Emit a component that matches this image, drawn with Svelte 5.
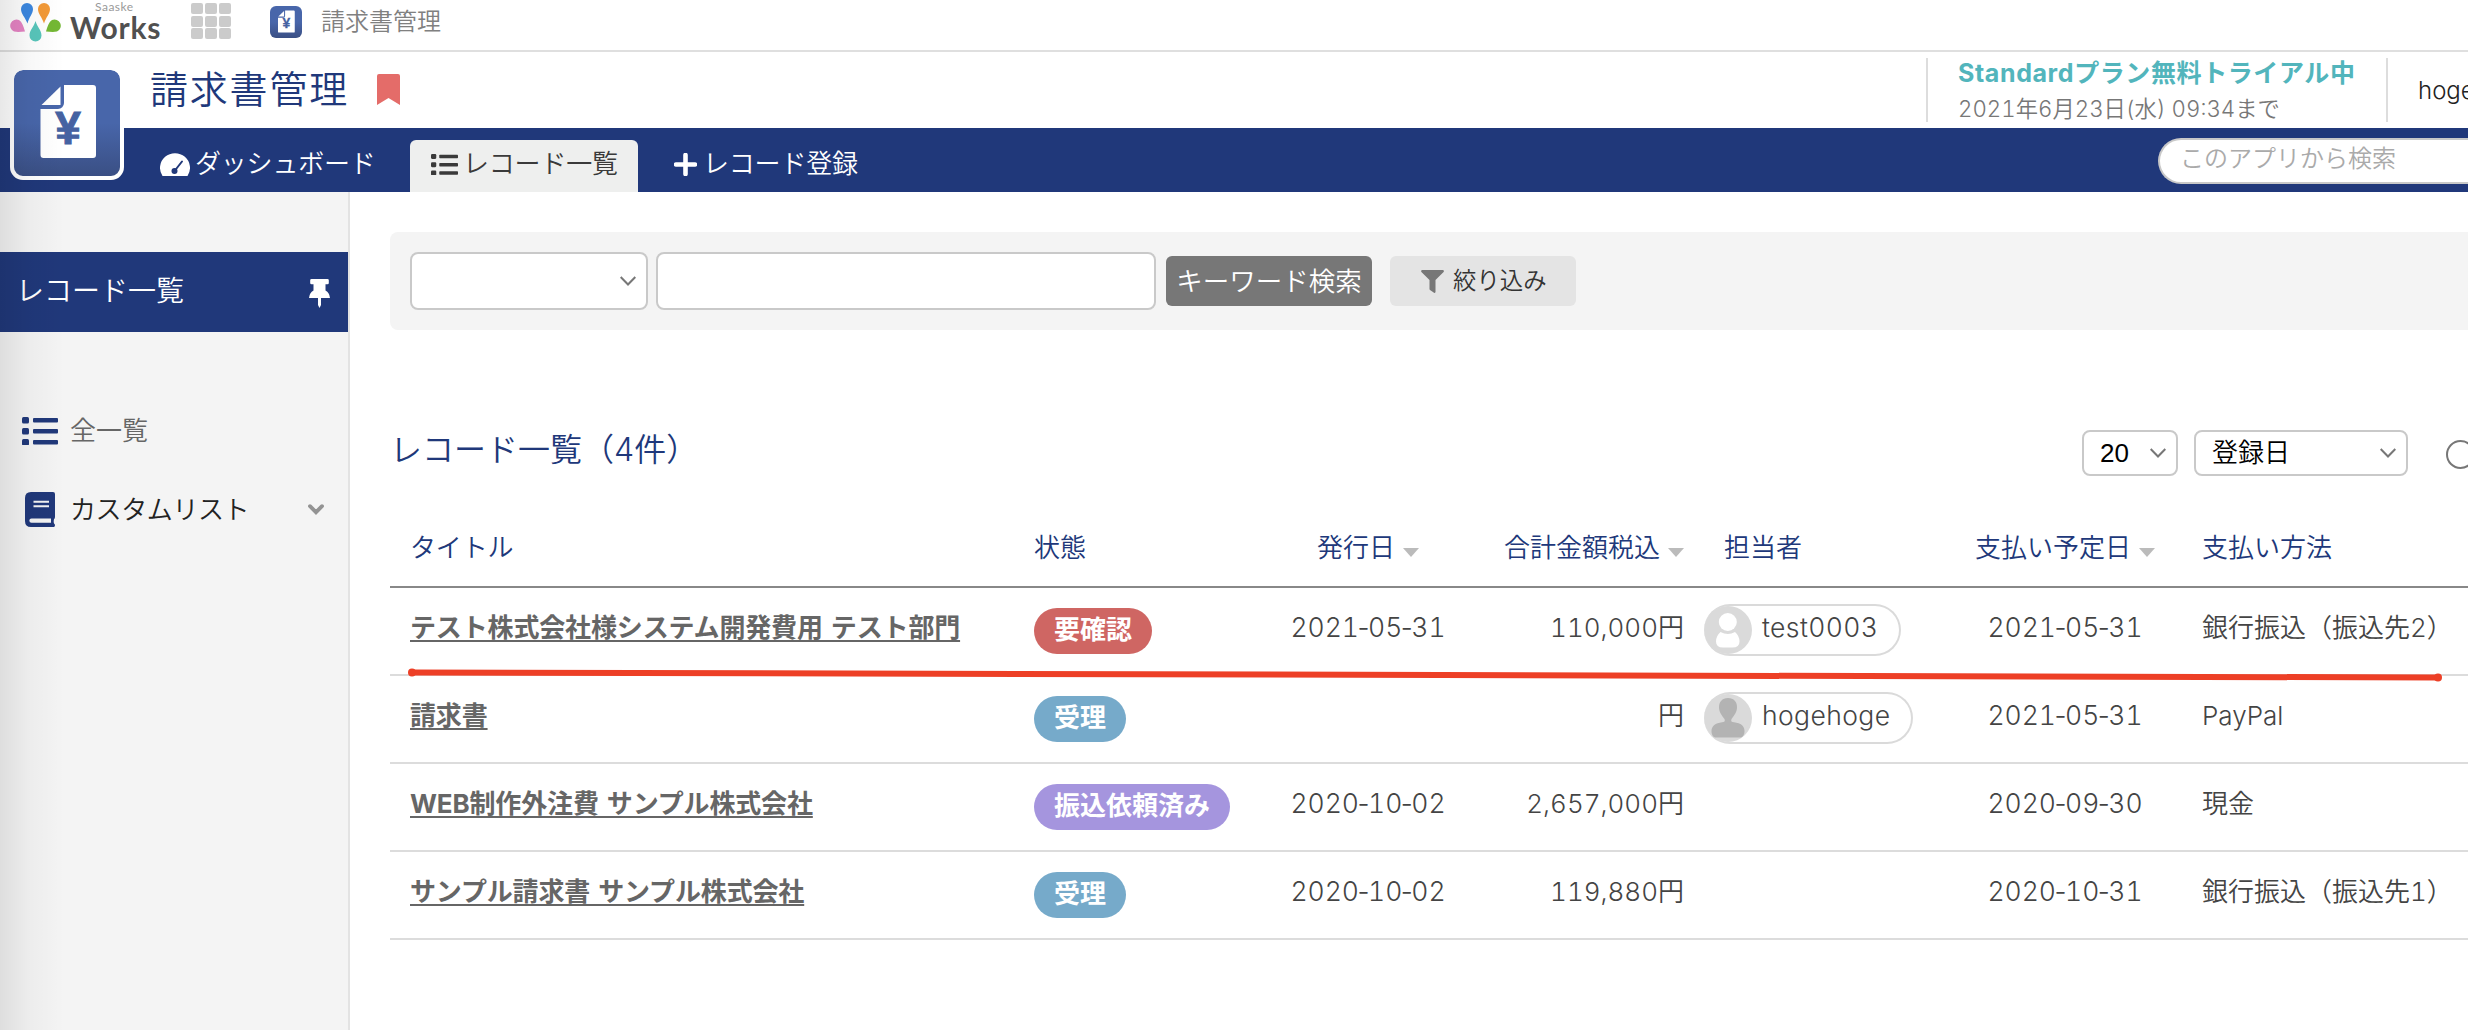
<script lang="ts">
    type Row = {
        title: string;
        status: string;
        tone: 'danger' | 'info' | 'violet';
        issued: string;
        amount: string;
        user?: string;
        avatar?: 'light' | 'dark';
        due: string;
        method: string;
    };

    const columns = [
        { key: 'title', label: 'タイトル', sortable: false },
        { key: 'status', label: '状態', sortable: false },
        { key: 'issued', label: '発行日', sortable: true },
        { key: 'amount', label: '合計金額税込', sortable: true },
        { key: 'user', label: '担当者', sortable: false },
        { key: 'due', label: '支払い予定日', sortable: true },
        { key: 'method', label: '支払い方法', sortable: false }
    ];

    const rows: Row[] = [
        { title: 'テスト株式会社様システム開発費用 テスト部門', status: '要確認', tone: 'danger', issued: '2021-05-31', amount: '110,000円', user: 'test0003', avatar: 'light', due: '2021-05-31', method: '銀行振込（振込先2）' },
        { title: '請求書', status: '受理', tone: 'info', issued: '', amount: '円', user: 'hogehoge', avatar: 'dark', due: '2021-05-31', method: 'PayPal' },
        { title: 'WEB制作外注費 サンプル株式会社', status: '振込依頼済み', tone: 'violet', issued: '2020-10-02', amount: '2,657,000円', due: '2020-09-30', method: '現金' },
        { title: 'サンプル請求書 サンプル株式会社', status: '受理', tone: 'info', issued: '2020-10-02', amount: '119,880円', due: '2020-10-31', method: '銀行振込（振込先1）' }
    ];
</script>

{#snippet invoice()}
    <svg viewBox="0 0 106 106">
        <path d="M50 15h29a3 3 0 0 1 3 3v67a3 3 0 0 1-3 3H29.500a3 3 0 0 1-3-3V39H44a6 6 0 0 0 6-6z" fill="#fff" />
        <path d="M46.500 16.500V35H27.500z" fill="#fff" />
        <text x="54" y="74" text-anchor="middle" class="yen">¥</text>
    </svg>
{/snippet}

{#snippet list()}
    <svg viewBox="0 0 36 28" fill="currentColor">
        {#each [0, 11, 22] as y}
            <rect x="0" {y} width="7" height="6.500" rx="1.500" />
            <rect x="11" y={y + 1} width="25" height="4.500" rx="1" />
        {/each}
    </svg>
{/snippet}

{#snippet chevron()}
    <svg class="chevron" viewBox="0 0 16 10" fill="none" stroke="currentColor" stroke-width="2">
        <path d="M0.700 1 8 8.500 15.300 1" />
    </svg>
{/snippet}

{#snippet date(value: string)}
    {#each value.split('-') as part, i}{#if i > 0}<span class="dash">-</span>{/if}{part}{/each}
{/snippet}

<div class="app">
    <div class="topbar">
        <div class="logo">
            <svg class="logo__mark" viewBox="0 0 52 40">
                <path d="M17.500 20.500C15 14 11 11 11 6a6 6 0 0 1 12 0c0 5-4 8-5.500 14.500z" fill="#3b87e0" />
                <path d="M34 20.500C32 14 28 11 28 6a6 6 0 0 1 12 0c0 5-4 8-6 14.500z" fill="#f39a38" />
                <path d="M15 28.500c-4 .3-7.500.8-11 0A6 6 0 1 1 9 17c3 2 4.500 6 6 11.500z" fill="#e583c3" />
                <path d="M36 28.500c4 .3 7.500.8 11 0A6 6 0 1 0 42 17c-3 2-4.500 6-6 11.500z" fill="#74b834" />
                <path d="M25.500 18C24 24 19.500 27 19.500 32.500a6 6 0 0 0 12 0C31.500 27 27 24 25.500 18z" fill="#58c6bb" />
            </svg>
            <div class="logo__text">
                <span class="logo__sub">Saaske</span>
                <span class="logo__name">Works</span>
            </div>
        </div>
        <div class="launcher">
            {#each Array(9) as _}<i></i>{/each}
        </div>
        <div class="app-icon app-icon--small">{@render invoice()}</div>
        <span class="topbar__name">請求書管理</span>
    </div>

    <header class="header">
        <h1>請求書管理</h1>
        <svg class="bookmark" viewBox="0 0 23 31"><path d="M2 0h19a2 2 0 0 1 2 2v29l-11.500-7L0 31V2a2 2 0 0 1 2-2z" fill="#e46c69" /></svg>
        <div class="plan">
            <strong>Standardプラン無料トライアル中</strong>
            <span>2021年6月23日(水) 09:34まで</span>
        </div>
        <div class="account">hoge</div>
    </header>

    <nav class="nav">
        <a class="nav__item nav__item--first">
            <svg class="nav__gauge" viewBox="0 0 30 23">
                <path d="M2.500 23A15 14.700 0 1 1 27.500 23z" fill="#fff" />
                <path d="M14.500 18 22 8.500" stroke="#20387a" stroke-width="2" stroke-linecap="round" />
                <circle cx="14.500" cy="18" r="3" fill="#20387a" />
            </svg>
            ダッシュボード
        </a>
        <a class="nav__item nav__item--active"><span class="nav__list">{@render list()}</span>レコード一覧</a>
        <a class="nav__item nav__item--add">
            <svg class="nav__plus" viewBox="0 0 23 23"><path d="M11.500 2v19M2 11.500h19" stroke="#fff" stroke-width="4.600" stroke-linecap="round" /></svg>
            レコード登録
        </a>
        <div class="nav__search">このアプリから検索</div>
    </nav>
    <div class="app-icon app-icon--large">{@render invoice()}</div>

    <div class="body">
        <aside class="sidebar">
            <div class="sidebar__title">
                レコード一覧
                <svg class="pin" viewBox="0 0 21 29" fill="#fff">
                    <path d="M2.500 0h16q1.300 0 1.300 1.300V4q0 1.300-1.300 1.300h-2v6.200q4 2 4.500 7.500H0q.5-5.500 4.500-7.500V5.300h-2Q1.200 5.300 1.200 4V1.300Q1.200 0 2.500 0z" />
                    <path d="M9 18h3v8l-1.500 3L9 26z" />
                </svg>
            </div>
            <div class="sidebar__item">
                <span class="sidebar__icon">{@render list()}</span>
                全一覧
            </div>
            <div class="sidebar__item sidebar__item--dark">
                <span class="sidebar__icon">
                    <svg class="book" viewBox="0 0 30 35">
                        <path d="M6 0h22a2 2 0 0 1 2 2v23q0 1.500-1 2.200-.6 2.300 0 4.300 1 .7 1 1.700T29 35H6q-6 0-6-6V6q0-6 6-6z" fill="#20387a" />
                        <path d="M8.500 9.800h15.500M8.500 14.200h15.500" stroke="#f4f4f4" stroke-width="2" />
                        <path d="M6.500 26.500H26v4.300H6.500a2.150 2.150 0 0 1 0-4.300z" fill="#f4f4f4" />
                    </svg>
                </span>
                カスタムリスト
                <svg class="sidebar__toggle" viewBox="0 0 16 11"><path d="M2 2.200 8 8.200 14 2.200" fill="none" stroke="#939393" stroke-width="3.800" stroke-linecap="round" /></svg>
            </div>
        </aside>

        <main class="main">
            <div class="filter">
                <div class="field field--select">{@render chevron()}</div>
                <div class="field field--input"></div>
                <button type="button" class="btn btn--search">キーワード検索</button>
                <button type="button" class="btn btn--narrow">
                    <svg viewBox="0 0 23 23"><path d="M1 0h21q1.500.5.600 2L14.500 10v12q-.4 1.200-1.500.8l-4-2.800q-.5-.4-.5-1v-9L.4 2Q-.4.5 1 0z" fill="#777" /></svg>
                    絞り込み
                </button>
            </div>

            <div class="list-head">
                <h2>レコード一覧（4件）</h2>
                <div class="field field--count">20{@render chevron()}</div>
                <div class="field field--sort">登録日{@render chevron()}</div>
                <span class="radio"></span>
            </div>

            <div class="table">
                <div class="row row--head">
                    {#each columns as column}
                        <div class="cell cell--{column.key}">
                            {column.label}{#if column.sortable}<i class="sort"></i>{/if}
                        </div>
                    {/each}
                </div>
                {#each rows as row}
                    <div class="row">
                        <div class="cell cell--title"><a>{row.title}</a></div>
                        <div class="cell cell--status"><span class="badge badge--{row.tone}">{row.status}</span></div>
                        <div class="cell cell--issued">{@render date(row.issued)}</div>
                        <div class="cell cell--amount">{row.amount}</div>
                        <div class="cell cell--user">
                            {#if row.user}
                                <span class="chip">
                                    <svg viewBox="0 0 48 48">
                                        <circle cx="24" cy="24" r="24" fill="#dadada" />
                                        {#if row.avatar === 'light'}
                                            <circle cx="23.800" cy="16" r="9" fill="#fff" />
                                            <path d="M16.500 26q7.500 4 14.500 0 4.500 4 4.500 9.500 0 6-7 6h-9.500q-7 0-7-6 0-5.500 4.500-9.500z" fill="#fff" />
                                        {:else}
                                            <path d="M24 4c6 0 9 4 9 9 0 5.500-3 8.500-5.500 12-.8 2.500 0 3 2.500 3.300 7 .7 10.500 4 10.500 8.700 0 3.500-1.500 6.500-4 6.500h-25c-2.500 0-4-3-4-6.500 0-4.700 4-8 10.500-8.700 2.500-.3 3.300-.8 2.500-3.300C18 21.500 15 18.500 15 13c0-5 3-9 9-9z" fill="#b3b3b3" />
                                        {/if}
                                    </svg>
                                    <span class="chip__name">{row.user}</span>
                                </span>
                            {/if}
                        </div>
                        <div class="cell cell--due">{@render date(row.due)}</div>
                        <div class="cell cell--method">{row.method}</div>
                    </div>
                {/each}
                <svg class="marker" viewBox="0 0 2040 14">
                    <path d="M6 4.500 2032 9.500" stroke="#ed3f26" stroke-width="6" />
                    <circle cx="6" cy="4.500" r="4" fill="#ed3f26" />
                    <circle cx="2032" cy="9.600" r="4" fill="#ed3f26" />
                </svg>
            </div>
        </main>
    </div>
    <div class="edge-shadow"></div>
</div>

<style>
    :global(body) {
        overflow: hidden;
        background: #fff;
    }

    .app {
        position: relative;
        width: 2468px;
        height: 1030px;
        overflow: hidden;
        display: flex;
        flex-direction: column;
        font-family: Inter, "Noto Sans CJK JP", sans-serif;
        font-size: 26px;
        font-weight: 350;
        line-height: 40px;
        color: #444;
        white-space: nowrap;
    }

    svg {
        display: block;
        flex: none;
    }

    h1,
    h2 {
        margin: 0;
        font-weight: 350;
        color: #20387a;
    }

    .topbar {
        display: flex;
        height: 50px;
        border-bottom: 2px solid #dfdfdf;
    }

    .logo {
        display: flex;
        width: 191px;
    }

    .logo__mark {
        width: 52px;
        height: 40px;
        margin: 3px 8px 0 10px;
    }

    .logo__text {
        display: flex;
        flex-direction: column;
        color: #505050;
        font-family: Lato, sans-serif;
    }

    .logo__sub {
        margin-left: 25px;
        height: 12px;
        font-size: 12px;
        line-height: 14px;
        font-weight: 400;
        letter-spacing: 0.5px;
        color: #999;
    }

    .logo__name {
        font-size: 30px;
        line-height: 30px;
        font-weight: 700;
        letter-spacing: 0.8px;
    }

    .launcher {
        display: grid;
        grid-template-columns: repeat(3, 12px);
        grid-auto-rows: 11px;
        gap: 1.7px 2.2px;
        margin-top: 3px;
        width: 79px;
    }

    .launcher i {
        border-radius: 2px;
        background: #cbcbcb;
    }

    .app-icon {
        background: linear-gradient(#4866aa 50%, #3a4f84);
    }

    .app-icon svg {
        width: 100%;
        height: 100%;
    }

    .app-icon--small {
        width: 32px;
        height: 32px;
        margin-top: 6px;
        border-radius: 6px;
    }

    .app-icon--large {
        position: absolute;
        left: 10px;
        top: 66px;
        width: 106px;
        height: 106px;
        border: 4px solid #fff;
        border-radius: 13px;
        background-clip: padding-box;
    }

    .yen {
        font-family: "Liberation Sans", sans-serif;
        font-size: 46px;
        font-weight: 700;
        fill: #4562a2;
        stroke: #4562a2;
        stroke-width: 1px;
    }

    .topbar__name {
        margin-left: 19px;
        font-size: 24px;
        line-height: 43px;
        color: #808080;
    }

    .header {
        display: flex;
        height: 76px;
        padding-left: 150px;
    }

    h1 {
        font-size: 38px;
        line-height: 75px;
        letter-spacing: 1.8px;
    }

    .bookmark {
        width: 23px;
        height: 31px;
        margin: 22px 0 0 28px;
    }

    .plan {
        display: flex;
        flex-direction: column;
        height: 64px;
        width: 428px;
        margin: 6px 0 0 auto;
        padding-left: 30px;
        border-left: 2px solid #ddd;
        font-size: 22.300px;
        line-height: 41px;
        color: #777;
    }

    .plan strong {
        font-size: 25px;
        line-height: 30px;
        font-weight: 700;
        letter-spacing: 0.6px;
        color: #52b5bc;
    }

    .plan span {
        font-variant-numeric: tabular-nums;
    }

    .account {
        width: 50px;
        height: 64px;
        margin-top: 6px;
        padding-left: 30px;
        border-left: 2px solid #ddd;
        font-size: 24px;
        line-height: 66px;
        color: #222;
    }

    .nav {
        display: flex;
        height: 64px;
        background: #20387a;
        color: #fff;
    }

    .nav__item {
        display: flex;
        margin-top: 12px;
        height: 52px;
        line-height: 48px;
        letter-spacing: -0.2px;
    }

    .nav__item--first {
        margin-left: 160px;
        width: 250px;
    }

    .nav__gauge {
        width: 30px;
        height: 23px;
        margin: 13px 5px 0 0;
    }

    .nav__item--active {
        width: 207px;
        padding-left: 21px;
        border-radius: 6px 6px 0 0;
        background: #eeefee;
        color: #3a3a3a;
    }

    .nav__list svg {
        width: 27px;
        height: 21px;
        margin: 14px 5px 0 0;
    }

    .nav__item--add {
        margin-left: 36px;
    }

    .nav__plus {
        width: 23px;
        height: 23px;
        margin: 13px 6px 0 0;
    }

    .nav__search {
        width: 288px;
        height: 42px;
        margin: 10px 0 0 auto;
        padding-left: 20px;
        border: 2px solid #c8c8c8;
        border-right: 0;
        border-radius: 23px 0 0 23px;
        background: #fff;
        font-size: 24px;
        line-height: 38px;
        color: #aaa;
    }

    .body {
        display: flex;
        flex: 1;
    }

    .sidebar {
        width: 348px;
        border-right: 2px solid #e3e3e3;
        background: #f4f4f4;
    }

    .sidebar__title {
        display: flex;
        justify-content: space-between;
        height: 80px;
        margin: 60px 0 59px;
        padding: 0 18px 0 16px;
        background: #20387a;
        color: #fff;
        font-size: 28px;
        line-height: 79px;
    }

    .pin {
        width: 21px;
        height: 29px;
        margin-top: 27px;
    }

    .sidebar__item {
        display: flex;
        align-items: center;
        height: 79px;
        padding: 0 24px 0 22px;
        color: #666;
    }

    .sidebar__item--dark {
        color: #222;
        letter-spacing: -0.4px;
    }

    .sidebar__icon {
        width: 48px;
        color: #20387a;
    }

    .sidebar__icon svg {
        width: 36px;
        height: 28px;
    }

    .sidebar__icon .book {
        width: 30px;
        height: 35px;
        margin-left: 3px;
    }

    .sidebar__toggle {
        width: 16px;
        height: 11px;
        margin-left: auto;
    }

    .main {
        flex: 1;
        padding: 40px 0 0 40px;
    }

    .filter {
        display: flex;
        height: 58px;
        padding: 20px;
        border-radius: 8px 0 0 8px;
        background: #f4f4f4;
    }

    .field {
        display: flex;
        align-items: center;
        box-sizing: border-box;
        border: 2px solid #c9c9c9;
        border-radius: 8px;
        background: #fff;
        color: #000;
    }

    .field--select {
        width: 238px;
        margin-right: 8px;
        padding-right: 10px;
    }

    .field--input {
        width: 500px;
        margin-right: 10px;
    }

    .chevron {
        width: 16px;
        height: 10px;
        margin-left: auto;
        color: #777;
    }

    .btn {
        height: 50px;
        margin: 4px 0 0;
        padding: 0;
        border: 0;
        border-radius: 6px;
        font: inherit;
        line-height: 48px;
    }

    .btn--search {
        width: 206px;
        margin-right: 18px;
        background: #777;
        color: #fff;
        font-size: 26.500px;
    }

    .btn--narrow {
        display: flex;
        width: 186px;
        padding-left: 31px;
        background: #e4e4e4;
        color: #333;
        font-size: 23.400px;
        line-height: 49px;
    }

    .btn--narrow svg {
        width: 23px;
        height: 23px;
        margin: 14px 9px 0 0;
    }

    .list-head {
        display: flex;
        height: 46px;
        margin-top: 100px;
    }

    h2 {
        width: 1692px;
        font-size: 32px;
        line-height: 39px;
    }

    .field--count {
        width: 96px;
        padding: 0 10px 0 16px;
        font-family: "Liberation Sans", sans-serif;
        font-weight: 400;
    }

    .field--sort {
        width: 214px;
        margin-left: 16px;
        padding: 0 10px 0 16px;
        line-height: 38px;
    }

    .radio {
        width: 25px;
        height: 25px;
        margin: 10px -20px 0 38px;
        border: 2px solid #777;
        border-radius: 50%;
    }

    .table {
        position: relative;
        margin-top: 34px;
    }

    .row {
        display: grid;
        grid-template-columns: 644px 250px 168px 232px 282px 198px 1fr;
        height: 86px;
        border-bottom: 2px solid #dcdcdc;
        line-height: 79px;
    }

    .row--head {
        height: 76px;
        border-bottom-color: #888;
        line-height: 76px;
        color: #20387a;
    }

    .cell--title {
        padding-left: 20px;
        letter-spacing: -0.15px;
        word-spacing: 2px;
    }

    .cell--title a {
        font-weight: 700;
        color: #666;
        text-decoration: underline;
        text-decoration-thickness: 2px;
        text-underline-offset: 3px;
        text-decoration-skip-ink: none;
    }

    .cell--issued,
    .cell--due {
        text-align: center;
        font-variant-numeric: tabular-nums;
    }

    .row:not(.row--head) .cell--issued,
    .row:not(.row--head) .cell--due {
        font-size: 26.500px;
    }

    .dash {
        margin: 0 -1.5px;
        font-variant-numeric: normal;
    }

    .cell--amount {
        text-align: right;
        font-variant-numeric: tabular-nums;
    }

    .cell--user {
        padding-left: 20px;
    }

    .row--head .cell--user {
        padding-left: 40px;
    }

    .cell--method {
        padding-left: 38px;
        font-variant-numeric: tabular-nums;
    }

    .sort {
        display: inline-block;
        margin-left: 8px;
        border: 8px solid transparent;
        border-top: 9px solid #bbb;
        border-bottom: 0;
    }

    .badge {
        display: block;
        width: max-content;
        height: 46px;
        margin-top: 20px;
        padding: 0 20px;
        border-radius: 23px;
        font-weight: 700;
        line-height: 43px;
        color: #fff;
    }

    .badge--danger {
        background: #cf6663;
    }

    .badge--info {
        background: #76aaca;
    }

    .badge--violet {
        background: #a595de;
    }

    .chip {
        display: flex;
        align-items: center;
        box-sizing: border-box;
        width: max-content;
        height: 52px;
        margin-top: 16px;
        padding-right: 21px;
        border: 2px solid #dadada;
        border-left: 0;
        border-radius: 26px;
    }

    .chip svg {
        width: 48px;
        height: 48px;
        margin-right: 10px;
    }

    .chip__name {
        padding-bottom: 7px;
        font-size: 26.500px;
        line-height: 40px;
        letter-spacing: 0.4px;
        font-variant-numeric: tabular-nums;
    }

    .marker {
        position: absolute;
        left: 16px;
        top: 158px;
        width: 2040px;
        height: 14px;
    }

    .edge-shadow {
        position: absolute;
        inset: 0 auto 0 0;
        width: 64px;
        background: linear-gradient(90deg, rgba(0, 0, 0, 0.09), rgba(0, 0, 0, 0.03) 45%, transparent);
    }
</style>
